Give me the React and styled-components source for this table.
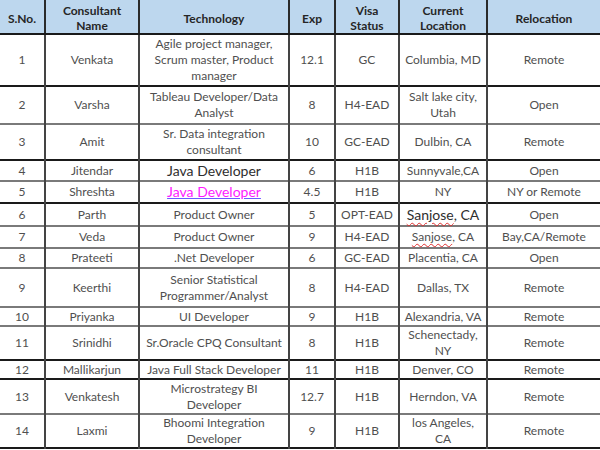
import React from "react";
import styled, { createGlobalStyle } from "styled-components";

const Global = createGlobalStyle`
  html, body { margin: 0; padding: 0; background: #ffffff; }
  body { font-family: Lato, "Liberation Sans", sans-serif; }
`;

const Table = styled.table`
  width: 600px;
  border-collapse: collapse;
  table-layout: fixed;
  font-family: Lato, "Liberation Sans", sans-serif;
  font-size: 12px;
  color: #4f4f4f;
`;

const HeadCell = styled.th`
  background: #bdd7ee;
  color: #262626;
  font-weight: 700;
  font-size: 12px;
  line-height: 15px;
  height: 30px;
  padding: 3px 2px 0;
  text-align: center;
  border-left: 2px solid #2a2a2a;
  border-bottom: 2px solid #1a1a1a;
  &:first-child { border-left: none; }
`;

const Row = styled.tr`
  height: ${(p) => p.$h}px;
  border-bottom: 2px solid ${(p) => (p.$dark ? "#1a1a1a" : "#7a7a7a")};
`;

const Cell = styled.td`
  padding: 0 2px;
  text-align: center;
  vertical-align: middle;
  line-height: 16px;
  white-space: pre-line;
  border-left: 2px solid #444;
  font-size: ${(p) => (p.$big ? "14px" : "12px")};
  color: ${(p) => (p.$big ? "#2e2e2e" : "#4f4f4f")};
  &:first-child { border-left: none; }
`;

const LinkText = styled.span`
  color: #ff1aff;
  text-decoration: underline;
  text-decoration-color: #6a5cff;
  font-size: 14px;
`;

const Squiggle = styled.span`
  text-decoration: underline wavy #e03030;
  text-decoration-thickness: 1px;
  text-underline-offset: 2px;
`;

const cols = [45, 94, 150, 46, 64, 88, 113];

const rows = [
  { n: 1, name: "Venkata", tech: "Agile project manager,\nScrum master, Product\nmanager", exp: "12.1", visa: "GC", loc: "Columbia, MD", rel: "Remote", h: 52, dark: true },
  { n: 2, name: "Varsha", tech: "Tableau Developer/Data\nAnalyst", exp: "8", visa: "H4-EAD", loc: "Salt lake city,\nUtah", rel: "Open", h: 38, dark: false },
  { n: 3, name: "Amit", tech: "Sr. Data integration\nconsultant", exp: "10", visa: "GC-EAD", loc: "Dulbin, CA", rel: "Remote", h: 36, dark: true },
  { n: 4, name: "Jitendar", tech: "Java Developer", techBig: true, exp: "6", visa: "H1B", loc: "Sunnyvale,CA", rel: "Open", h: 21, dark: false },
  { n: 5, name: "Shreshta", tech: "Java Developer", link: true, exp: "4.5", visa: "H1B", loc: "NY", rel: "NY or Remote", h: 22, dark: true },
  { n: 6, name: "Parth", tech: "Product Owner", exp: "5", visa: "OPT-EAD", loc: "Sanjose, CA", squiggle: true, locBig: true, rel: "Open", h: 23, dark: false },
  { n: 7, name: "Veda", tech: "Product Owner", exp: "9", visa: "H4-EAD", loc: "Sanjose, CA", squiggle: true, rel: "Bay,CA/Remote", h: 22, dark: false },
  { n: 8, name: "Prateeti", tech: ".Net Developer", exp: "6", visa: "GC-EAD", loc: "Placentia, CA", rel: "Open", h: 20, dark: false },
  { n: 9, name: "Keerthi", tech: "Senior Statistical\nProgrammer/Analyst", exp: "8", visa: "H4-EAD", loc: "Dallas, TX", rel: "Remote", h: 39, dark: false },
  { n: 10, name: "Priyanka", tech: "UI Developer", exp: "9", visa: "H1B", loc: "Alexandria, VA", rel: "Remote", h: 19, dark: false },
  { n: 11, name: "Srinidhi", tech: "Sr.Oracle CPQ Consultant", exp: "8", visa: "H1B", loc: "Schenectady,\nNY", rel: "Remote", h: 34, dark: true },
  { n: 12, name: "Mallikarjun", tech: "Java Full Stack Developer", exp: "11", visa: "H1B", loc: "Denver, CO", rel: "Remote", h: 19, dark: true },
  { n: 13, name: "Venkatesh", tech: "Microstrategy BI\nDeveloper", exp: "12.7", visa: "H1B", loc: "Herndon, VA", rel: "Remote", h: 35, dark: false },
  { n: 14, name: "Laxmi", tech: "Bhoomi Integration\nDeveloper", exp: "9", visa: "H1B", loc: "los Angeles,\nCA", rel: "Remote", h: 33, dark: true },
];

function Location({ r }) {
  if (r.squiggle) {
    const [first, rest] = r.loc.split(",");
    return (
      <>
        <Squiggle>{first}</Squiggle>,{rest}
      </>
    );
  }
  return r.loc;
}

export default function App() {
  return (
    <>
      <Global />
      <Table>
        <colgroup>
          {cols.map((w, i) => (
            <col key={i} style={{ width: w }} />
          ))}
        </colgroup>
        <thead>
          <tr>
            <HeadCell>S.No.</HeadCell>
            <HeadCell>Consultant<br />Name</HeadCell>
            <HeadCell>Technology</HeadCell>
            <HeadCell>Exp</HeadCell>
            <HeadCell>Visa<br />Status</HeadCell>
            <HeadCell>Current<br />Location</HeadCell>
            <HeadCell>Relocation</HeadCell>
          </tr>
        </thead>
        <tbody>
          {rows.map((r) => (
            <Row key={r.n} $h={r.h} $dark={r.dark}>
              <Cell>{r.n}</Cell>
              <Cell>{r.name}</Cell>
              <Cell $big={r.techBig}>
                {r.link ? <LinkText>{r.tech}</LinkText> : r.tech}
              </Cell>
              <Cell>{r.exp}</Cell>
              <Cell>{r.visa}</Cell>
              <Cell $big={r.locBig}>
                <Location r={r} />
              </Cell>
              <Cell>{r.rel}</Cell>
            </Row>
          ))}
        </tbody>
      </Table>
    </>
  );
}
